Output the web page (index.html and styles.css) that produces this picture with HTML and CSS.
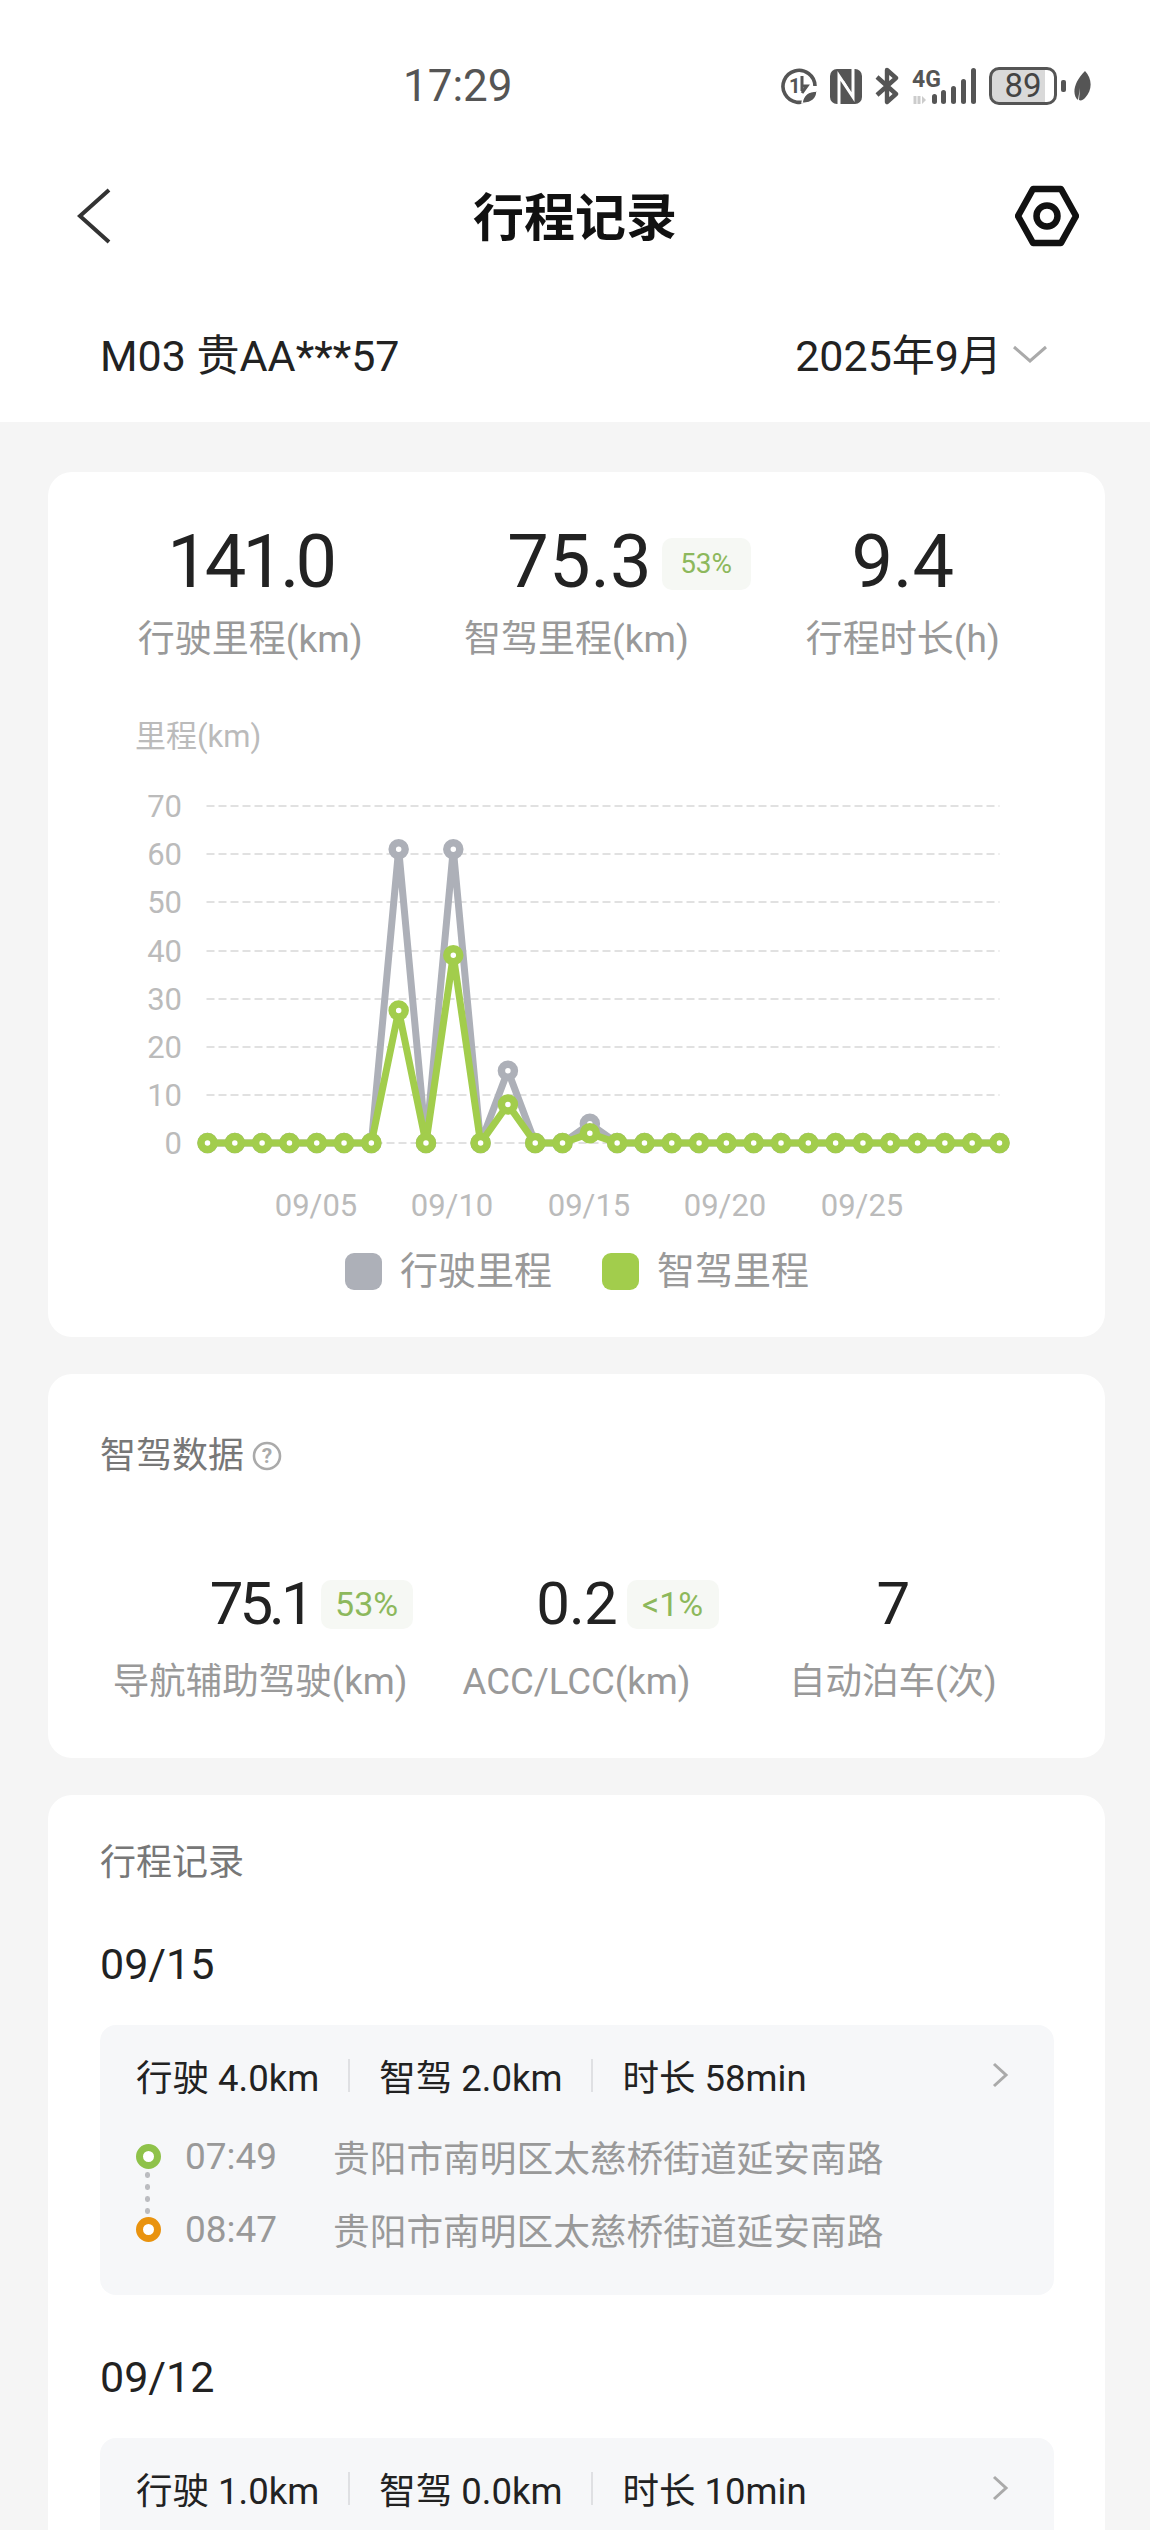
FILE: index.html
```html
<!DOCTYPE html>
<html>
<head>
<meta charset="UTF-8">
<meta name="viewport" content="width=device-width, initial-scale=1.0">
<title>行程记录</title>
<link rel="stylesheet" href="styles.css">
</head>
<body>
<div class="page">
    <div class="top">
        <div class="status">
            <span class="time">17:29</span>
            <div class="status-icons">
                <svg width="36" height="38" viewBox="0 0 36 38">
                    <path d="M29 31A16 16 0 1 1 34 19" fill="none" stroke="#555" stroke-width="3.6"/>
                    <text x="8" y="26" class="tiny">1</text>
                    <path d="M21 9V24M21 26L26 19H21" fill="none" stroke="#555" stroke-width="3"/>
                    <path d="M21 36C22 28 28 24 36 24C36 32 30 37 21 36Z" fill="#555" stroke="#fff" stroke-width="1.5"/>
                </svg>
                <svg width="32" height="38" viewBox="0 0 32 38">
                    <rect y="2" width="32" height="35" rx="7" fill="#555"/>
                    <path d="M9 37V9L23 30V2" fill="none" stroke="#fff" stroke-width="3"/>
                    <path d="M13 14L19 24" stroke="#fff" stroke-width="2"/>
                </svg>
                <svg width="24" height="38" viewBox="0 0 24 38">
                    <path d="M2 10L21 27L12 35V3L21 11L2 28" fill="none" stroke="#555" stroke-width="4.4" stroke-linejoin="round"/>
                </svg>
                <svg width="64" height="38" viewBox="0 0 64 38">
                    <text x="0" y="20" class="net">4G</text>
                    <path d="M3 29V37M7 29V37" stroke="#ccc" stroke-width="3"/>
                    <path d="M10 29L14 33L10 37Z" fill="#ccc"/>
                    <rect x="20" y="27" width="5" height="10" rx="2.5" fill="#555"/>
                    <rect x="29" y="23" width="5" height="14" rx="2.5" fill="#555"/>
                    <rect x="39" y="19" width="5" height="18" rx="2.5" fill="#555"/>
                    <rect x="49" y="12" width="5" height="25" rx="2.5" fill="#555"/>
                    <rect x="59" y="1" width="5" height="36" rx="2.5" fill="#555"/>
                </svg>
                <div class="battery">
                    <div class="battery-body">89</div>
                    <div class="battery-nub"></div>
                </div>
                <svg width="19" height="30" viewBox="0 0 19 30">
                    <path d="M12 0C19 7 20 19 12 27C10 29 8 30 6 29L7 17L5 29C-1 24 0 12 12 0Z" fill="#555"/>
                </svg>
            </div>
        </div>
        <div class="nav">
            <svg class="nav-icon" viewBox="0 0 64 64" width="64" height="64">
                <path d="M38 6L9 32L38 58" fill="none" stroke="#333" stroke-width="4"/>
            </svg>
            <h1>行程记录</h1>
            <svg class="nav-icon" viewBox="0 0 64 64" width="64" height="64">
                <path d="M18 5H46L61 32L46 59H18L3 32Z" fill="none" stroke="#111" stroke-width="6.5" stroke-linejoin="round"/>
                <circle cx="32" cy="32" r="10.5" fill="none" stroke="#111" stroke-width="6.5"/>
            </svg>
        </div>
        <div class="vehicle">
            <span>M03 贵AA***57</span>
            <span class="month">2025年9月
                <svg class="month-arrow" width="36" height="20" viewBox="0 0 36 20"><path d="M2 3L18 17L34 3" fill="none" stroke="#aaa" stroke-width="3"/></svg>
            </span>
        </div>
    </div>

    <div class="card chart-card">
        <div class="stats">
            <div class="stat">
                <div class="stat-value tight">141.0</div>
                <div class="stat-label">行驶里程(km)</div>
            </div>
            <div class="stat">
                <div class="stat-value nudge">75.3<span class="badge badge-big">53%</span></div>
                <div class="stat-label">智驾里程(km)</div>
            </div>
            <div class="stat">
                <div class="stat-value">9.4</div>
                <div class="stat-label">行程时长(h)</div>
            </div>
        </div>
        <div class="chart-title">里程(km)</div>
        <svg class="chart" id="chart" width="1057" height="460" viewBox="0 0 1057 460">
            <g class="grid">
                <line x1="158.5" x2="951.5" y1="36" y2="36"/>
                <line x1="158.5" x2="951.5" y1="84" y2="84"/>
                <line x1="158.5" x2="951.5" y1="132" y2="132"/>
                <line x1="158.5" x2="951.5" y1="181" y2="181"/>
                <line x1="158.5" x2="951.5" y1="229" y2="229"/>
                <line x1="158.5" x2="951.5" y1="277" y2="277"/>
                <line x1="158.5" x2="951.5" y1="325" y2="325"/>
                <line x1="158.5" x2="951.5" y1="373" y2="373"/>
            </g>
            <g class="y-labels">
                <text x="134" y="47">70</text>
                <text x="134" y="95">60</text>
                <text x="134" y="143">50</text>
                <text x="134" y="192">40</text>
                <text x="134" y="240">30</text>
                <text x="134" y="288">20</text>
                <text x="134" y="336">10</text>
                <text x="134" y="384">0</text>
            </g>
            <g class="x-labels">
                <text x="268" y="446">09/05</text>
                <text x="404" y="446">09/10</text>
                <text x="541" y="446">09/15</text>
                <text x="677" y="446">09/20</text>
                <text x="814" y="446">09/25</text>
            </g>
        </svg>
        <div class="legend">
            <span class="legend-item"><i class="swatch swatch-grey"></i>行驶里程</span>
            <span class="legend-item"><i class="swatch swatch-green"></i>智驾里程</span>
        </div>
    </div>

    <div class="card smart-card">
        <div class="card-title">智驾数据
            <svg width="30" height="30" viewBox="0 0 30 30">
                <circle cx="15" cy="15" r="13" fill="none" stroke="#aaa" stroke-width="2.6"/>
                <text x="15" y="22" class="help">?</text>
            </svg>
        </div>
        <div class="smart-stats">
            <div class="stat">
                <div class="smart-value narrow">75.1<span class="badge badge-small">53%</span></div>
                <div class="stat-label">导航辅助驾驶(km)</div>
            </div>
            <div class="stat">
                <div class="smart-value">0.2<span class="badge badge-small">&lt;1%</span></div>
                <div class="stat-label">ACC/LCC(km)</div>
            </div>
            <div class="stat">
                <div class="smart-value">7</div>
                <div class="stat-label">自动泊车(次)</div>
            </div>
        </div>
    </div>

    <div class="card trips-card">
        <div class="card-title">行程记录</div>

        <div class="trip-date">09/15</div>
        <div class="trip">
            <div class="trip-summary">
                <span>行驶 4.0km</span><i class="sep"></i>
                <span>智驾 2.0km</span><i class="sep"></i>
                <span>时长 58min</span>
                <svg class="trip-arrow" width="18" height="26" viewBox="0 0 18 26"><path d="M3 2L15 13L3 24" fill="none" stroke="#aaa" stroke-width="3"/></svg>
            </div>
            <div class="trip-points">
                <div class="trip-row">
                    <i class="ring ring-start"></i>
                    <span class="trip-time">07:49</span>
                    <span>贵阳市南明区太慈桥街道延安南路</span>
                </div>
                <div class="trip-row">
                    <i class="ring ring-end"></i>
                    <span class="trip-time">08:47</span>
                    <span>贵阳市南明区太慈桥街道延安南路</span>
                </div>
            </div>
        </div>

        <div class="trip-date trip-date-next">09/12</div>
        <div class="trip trip-cut">
            <div class="trip-summary">
                <span>行驶 1.0km</span><i class="sep"></i>
                <span>智驾 0.0km</span><i class="sep"></i>
                <span>时长 10min</span>
                <svg class="trip-arrow" width="18" height="26" viewBox="0 0 18 26"><path d="M3 2L15 13L3 24" fill="none" stroke="#aaa" stroke-width="3"/></svg>
            </div>
        </div>
    </div>
</div>
<script src="chart.js"></script>
</body>
</html>
```

FILE: styles.css
```css
* {
    box-sizing: border-box;
}
body {
    margin: 0;
    padding: 0;
    font-family: Roboto, "Noto Sans CJK SC", sans-serif;
    background-color: #f5f5f5;
}
.page {
    height: 2530px;
    overflow: hidden;
}

/* Top white area */
.top {
    background-color: #ffffff;
    height: 422px;
}
.status {
    display: flex;
    align-items: center;
    height: 170px;
    padding: 2px 58px 0 403px;
}
.time {
    font-size: 44px;
    color: #555;
}
.status-icons {
    display: flex;
    align-items: center;
    margin-left: auto;
}
.status-icons svg {
    margin-right: 13px;
}
.status-icons svg:last-child {
    margin-right: 0;
}
.tiny {
    font-size: 20px;
    font-weight: 700;
    fill: #555;
}
.net {
    font-size: 23px;
    font-weight: 700;
    fill: #555;
}
.battery {
    display: flex;
    align-items: center;
    margin-right: 7px;
}
.battery-body {
    width: 68px;
    height: 38px;
    border: 3px solid #555;
    border-radius: 10px;
    background: linear-gradient(to right, #d9d9d9 86%, #fff 86%);
    color: #444;
    font-size: 33px;
    line-height: 32px;
    text-align: center;
}
.battery-nub {
    width: 5px;
    height: 12px;
    margin-left: 4px;
    border-radius: 2px;
    background-color: #555;
}
.nav {
    display: flex;
    align-items: center;
    justify-content: space-between;
    height: 92px;
    padding: 0 71px;
}
.nav-icon {
    display: block;
}
h1 {
    margin: -5px 0 0;
    font-size: 51px;
    font-weight: 700;
    color: #111;
}
.vehicle {
    display: flex;
    align-items: center;
    justify-content: space-between;
    height: 134px;
    margin-top: 23px;
    padding: 0 102px 0 100px;
    font-size: 43px;
    color: #222;
}
.month {
    display: flex;
    align-items: center;
    gap: 10px;
}
.month-arrow {
    margin-top: 4px;
}

/* Cards */
.card {
    margin: 0 45px 37px 48px;
    background-color: #ffffff;
    border-radius: 24px;
}
.chart-card {
    height: 865px;
    margin-top: 50px;
    padding-top: 45px;
}
.stats {
    display: grid;
    grid-template-columns: repeat(3, 1fr);
    padding: 0 39px;
}
.stat {
    text-align: center;
}
.stat-value {
    position: relative;
    display: inline-block;
    font-size: 74px;
    line-height: 90px;
    color: #222;
}
.tight {
    letter-spacing: -4px;
}
.nudge {
    margin-left: 6px;
}
.stat-label {
    height: 50px;
    margin-top: 8px;
    font-size: 37px;
    line-height: 50px;
    color: #999;
    white-space: nowrap;
}
.badge {
    position: absolute;
    top: 0;
    left: 100%;
    border-radius: 10px;
    background-color: #f6f8f4;
    color: #8db85c;
    text-align: center;
    letter-spacing: 0;
}
.badge-big {
    width: 89px;
    height: 52px;
    margin: 21px 0 0 10px;
    font-size: 28px;
    line-height: 52px;
}
.badge-small {
    width: 92px;
    height: 49px;
    margin: 11px 0 0 10px;
    font-size: 34px;
    line-height: 49px;
}
.chart-title {
    height: 40px;
    margin-top: 52px;
    padding-left: 87px;
    font-size: 31px;
    line-height: 40px;
    color: #bbb;
}
.chart {
    display: block;
    margin-top: 13px;
}
.grid line {
    stroke: #d8d8d8;
    stroke-width: 1.5;
    stroke-dasharray: 8 4;
}
.y-labels text {
    font-size: 31px;
    fill: #bbb;
    text-anchor: end;
}
.x-labels text {
    font-size: 31px;
    fill: #bbb;
    text-anchor: middle;
}
.series {
    fill: none;
    stroke-width: 7;
    stroke-linejoin: round;
}
.dot {
    fill: #ffffff;
    stroke-width: 7.5;
}
.grey {
    stroke: #adb0b8;
}
.green {
    stroke: #a2cd4c;
}
.legend {
    display: flex;
    gap: 50px;
    height: 40px;
    margin-top: 21px;
    padding-left: 297px;
    font-size: 38px;
    line-height: 40px;
    color: #999;
}
.legend-item {
    display: flex;
    align-items: center;
    gap: 18px;
}
.swatch {
    display: block;
    width: 37px;
    height: 37px;
    border-radius: 9px;
}
.swatch-grey {
    background-color: #adb0b8;
}
.swatch-green {
    background-color: #a2cd4c;
}
.smart-card {
    height: 384px;
    padding-top: 57px;
}
.card-title {
    display: flex;
    align-items: center;
    gap: 8px;
    height: 50px;
    padding-left: 52px;
    font-size: 36px;
    line-height: 50px;
    color: #777;
}
.help {
    font-size: 21px;
    font-weight: 700;
    fill: #aaa;
    text-anchor: middle;
}
.smart-stats {
    display: grid;
    grid-template-columns: repeat(3, 1fr);
    margin-top: 88px;
    padding: 0 54px;
}
.smart-value {
    position: relative;
    display: inline-block;
    font-size: 60px;
    line-height: 70px;
    color: #222;
    letter-spacing: -1px;
}
.narrow {
    letter-spacing: -4px;
}
.smart-stats .stat-label {
    margin-top: 18px;
    font-size: 36.5px;
}

/* Trip list */
.trips-card {
    margin-bottom: 0;
    padding: 43px 51px 0 52px;
}
.trips-card .card-title {
    padding-left: 0;
}
.trip-date {
    height: 56px;
    margin-top: 48px;
    font-size: 43px;
    line-height: 56px;
    color: #222;
}
.trip-date-next {
    margin-top: 54px;
}
.trip {
    margin-top: 33px;
    padding: 25px 45px 41px 36px;
    background-color: #f6f7f9;
    border-radius: 16px;
}
.trip-cut {
    min-height: 270px;
}
.trip-summary {
    display: flex;
    align-items: center;
    height: 50px;
    font-size: 36.5px;
    color: #222;
}
.sep {
    display: block;
    width: 2px;
    height: 33px;
    margin: 0 29px;
    background-color: #dfe0e3;
}
.trip-arrow {
    margin-left: auto;
}
.trip-points {
    position: relative;
    margin-top: 31px;
}
.trip-points::before {
    content: "";
    position: absolute;
    left: 9px;
    top: 38px;
    width: 5px;
    height: 48px;
    background-image: radial-gradient(circle, #bbbcc0 2.8px, transparent 3px);
    background-size: 6px 12px;
    background-position: center top;
}
.trip-row {
    display: flex;
    align-items: center;
    height: 50px;
    margin-bottom: 23px;
    font-size: 36.7px;
    color: #999;
    white-space: nowrap;
}
.trip-row:last-child {
    margin-bottom: 0;
}
.ring {
    display: block;
    flex: none;
    width: 25px;
    height: 25px;
    border-radius: 50%;
    border: 7px solid;
    background-color: #ffffff;
}
.ring-start {
    border-color: #8fc24a;
}
.ring-end {
    border-color: #e9930f;
}
.trip-time {
    width: 148px;
    margin-left: 24px;
    font-size: 37px;
}
```

FILE: chart.js
```js
// daily km for september, index 0 = 09/01
var chart = document.getElementById("chart");
var driven = new Array(30).fill(0);
var smart = new Array(30).fill(0);
driven[7] = 61; driven[9] = 61; driven[11] = 15; driven[14] = 4;
smart[7] = 27.5; smart[9] = 39; smart[11] = 8; smart[14] = 2;

function pointX(i) {
    return 159.5 + i * 27.31;
}
function pointY(v) {
    return 373 - v * 4.814;
}
function add(name, attrs) {
    var el = document.createElementNS("http://www.w3.org/2000/svg", name);
    for (var key in attrs) {
        el.setAttribute(key, attrs[key]);
    }
    chart.appendChild(el);
}
function drawSeries(data, color) {
    var pts = data.map(function (v, i) {
        return pointX(i) + "," + pointY(v);
    });
    add("polyline", { points: pts.join(" "), "class": "series " + color });
    data.forEach(function (v, i) {
        add("circle", { cx: pointX(i), cy: pointY(v), r: 6.5, "class": "dot " + color });
    });
}
drawSeries(driven, "grey");
drawSeries(smart, "green");
```
